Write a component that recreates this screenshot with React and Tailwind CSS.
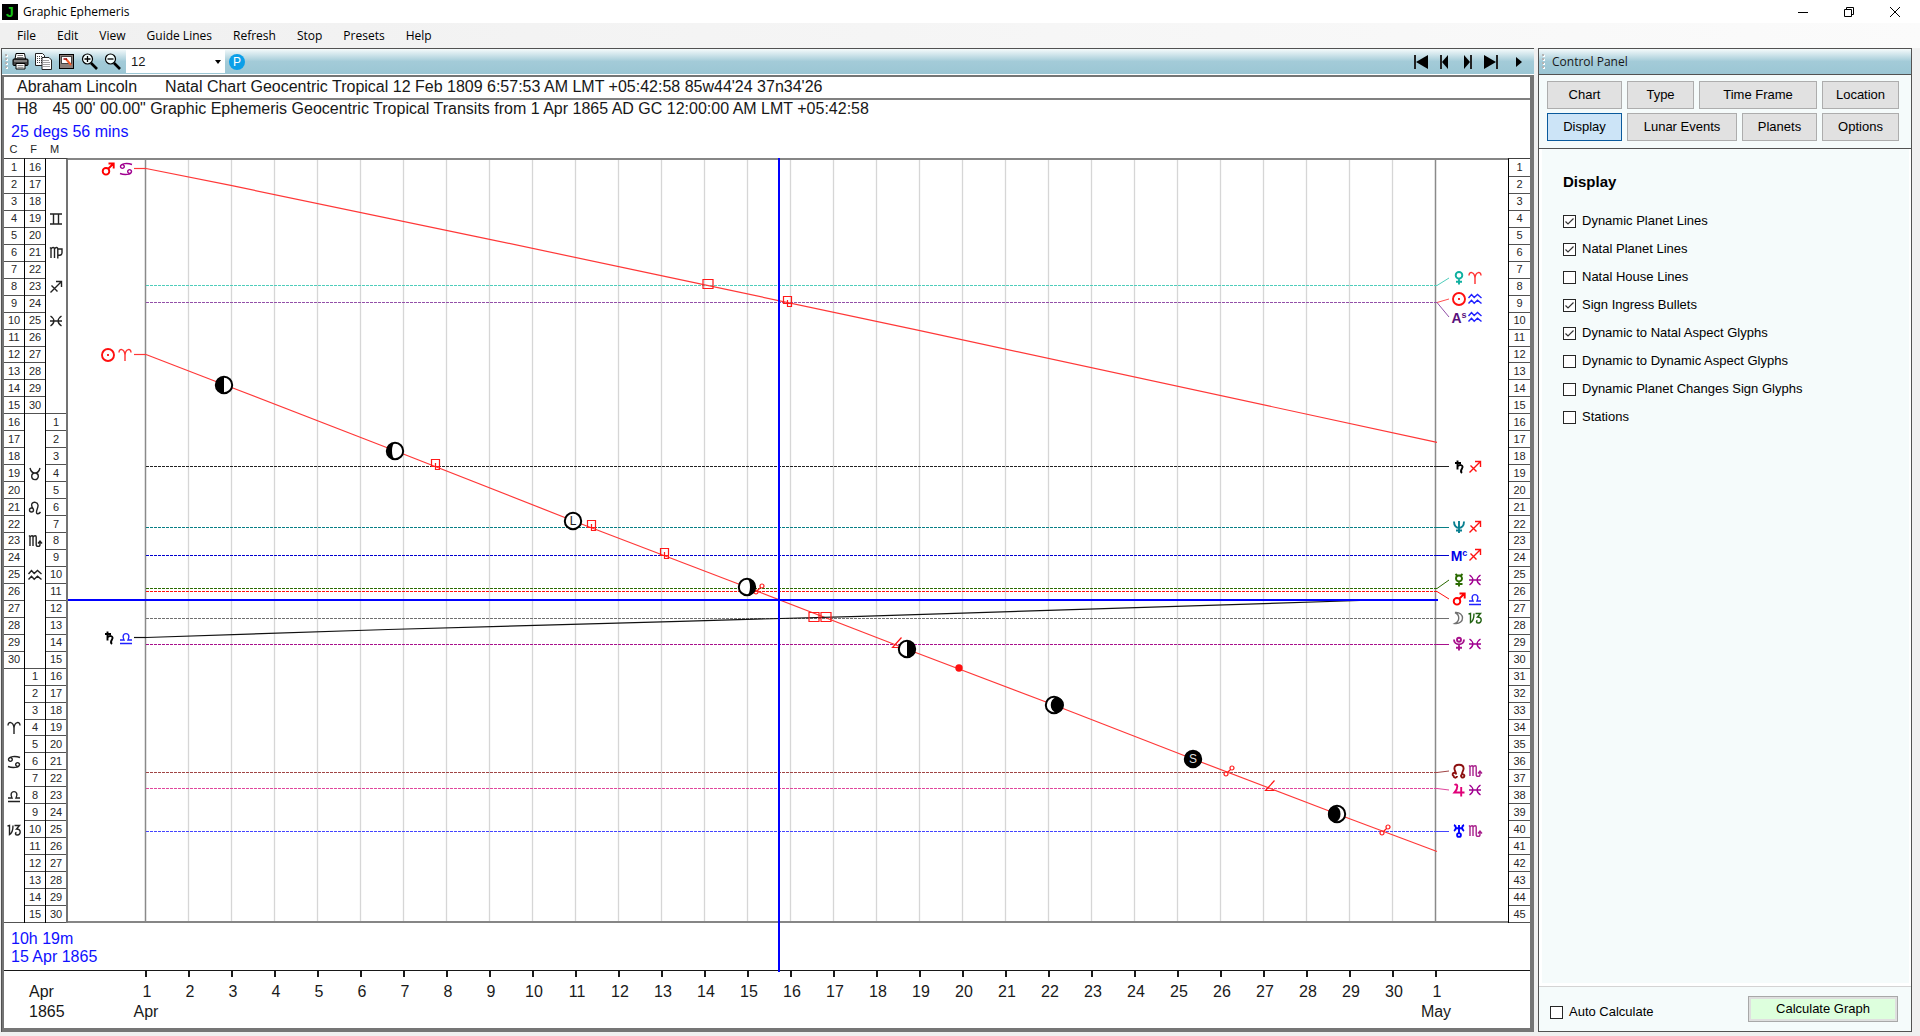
import React from "react";

const SIGNS = {
  aries: "M-6,-2.5C-6,-7 -0.5,-6.5 0,0V6M6,-2.5C6,-7 0.5,-6.5 0,0",
  taurus: "M-5,-6C-4,-2 -2,-1 0,-1S4,-2 5,-6M0,-1A3.3,3.3 0 1 1 0,5.6A3.3,3.3 0 1 1 0,-1",
  gemini: "M-6,-5H6M-6,5H6M-2.5,-5V5M2.5,-5V5",
  cancer:
    "M-5.5,-2.5A1.9,1.9 0 1 1 -1.7,-2.5A1.9,1.9 0 1 1 -5.5,-2.5C-5.5,-6 2,-6 6,-4.5M5.5,2.5A1.9,1.9 0 1 1 1.7,2.5A1.9,1.9 0 1 1 5.5,2.5C5.5,6 -2,6 -6,4.5",
  leo: "M-1.5,2A2,2 0 1 1 -5.5,2A2,2 0 1 1 -1.5,2C-1.5,0 -4.5,-1.5 -3,-4.5C-1.5,-6.5 2.5,-6 3,-3C3.5,0 0,4 2,5.5C3,6 4.5,5.5 5.5,4",
  virgo:
    "M-6,-5.5L-5,-4.5V5M-5,-4C-3.5,-6.5 -1.5,-5.5 -1.5,-4V5M-1.5,-4C0,-6.5 1.8,-5.5 1.8,-4V5.5M1.8,-4H6V0C6,2 4,2.5 1.8,2.5",
  libra: "M-6,5.5H6M-6,2H-2C-6.5,-6.5 6.5,-6.5 2,2H6",
  scorpio:
    "M-6,-5.5L-5,-4.5V5M-5,-4C-3.5,-6 -2,-5.5 -2,-4V5M-2,-4C-0.5,-6 1.2,-5.5 1.2,-4V3.5C1.2,6 5,6 5,3.5V0.5M3,2.5L5,0L7,2.5",
  sagittarius: "M-5.5,5.5L5.5,-5.5M0,-5.5H5.5V0M-4.5,-1.5L1.5,4.5",
  capricorn:
    "M-6.5,-4L-4.5,-4.5V4.5C-1.5,3 -1,0 -1,-4.5M0.5,-4.5H5.5L2.5,-1C7.5,-1 7,5 3.5,5C1.2,5 0.8,3 2.5,2.5",
  aquarius: "M-6.5,-1L-3.5,-4.5L-0.8,-1.5L2.5,-4.5L6.5,-1M-6.5,4.5L-3.5,1.2L-0.8,4.2L2.5,1.2L6.5,4.5",
  pisces: "M-5.5,-5C-1,-2 -1,2 -5.5,5M5.5,-5C1,-2 1,2 5.5,5M-6,0H6",
};

const PLANETS = {
  mars: "M1.3,2.3A3.3,3.3 0 1 1 -5.3,2.3A3.3,3.3 0 1 1 1.3,2.3M0.5,-0.5L5.5,-5.5M0.5,-5.5H5.7V-0.5",
  venus: "M3.3,-2.7A3.3,3.3 0 1 1 -3.3,-2.7A3.3,3.3 0 1 1 3.3,-2.7M0,0.8V6.5M-3,3.7H3",
  sun: "M6,0A6,6 0 1 1 -6,0A6,6 0 1 1 6,0M-0.9,0H0.9",
  saturn: "M-1.5,-6.5V2.5M-4,-4H2M-1.5,-0.5C1,-3.5 5,-1.5 3,1.5C2,3 1,4.5 3,6",
  neptune: "M-5,-5.5C-5,3 5,3 5,-5.5M0,-6V6M-3,3.5H3",
  mercury: "M-3.5,-6L-2,-4.5H2L3.5,-6M3,-1.5A3,3 0 1 1 -3,-1.5A3,3 0 1 1 3,-1.5M0,1.5V6.5M-3.5,4H3.5",
  moon: "M-4,-5.5C6,-6.5 6,6.5 -4,5.5C1,3 1,-3 -4,-5.5",
  pluto: "M2,-4.2A2,2 0 1 1 -2,-4.2A2,2 0 1 1 2,-4.2M-5,-4.5C-5,2 5,2 5,-4.5M0,0.5V6.5M-3,3.7H3",
  node: "M-2,5A1.7,1.7 0 1 1 -5.4,5A1.7,1.7 0 1 1 -3,3.3C-2.5,1.5 -4.6,0 -4.6,-2.5C-4.6,-7.5 4.6,-7.5 4.6,-2.5C4.6,0 2.5,1.5 3,3.3A1.7,1.7 0 1 1 2,5A1.7,1.7 0 1 1 5.4,5",
  jupiter: "M-4.5,-5C-1,-7 -0.5,-2 -4.5,2.5H5.5M2.2,-3V6.5",
  uranus: "M-5,-6C-2.5,-5 -2.5,-1.5 -5,0M5,-6C2.5,-5 2.5,-1.5 5,0M-4,-2.7H4M0,-6V2M1.9,4A1.9,1.9 0 1 1 -1.9,4A1.9,1.9 0 1 1 1.9,4",
};

const LEFT = 68;
const WIDTH = 1440;
const TOP = 158;
const HEIGHT = 765;
const px = (x) => `${((x - LEFT) / WIDTH) * 100}%`;
const py = (y) => `${((y - TOP) / HEIGHT) * 100}%`;
const dayX = (i) => 146 + 43 * i;
const DAYS = Array.from({ length: 31 }, (_, i) => i);

function At({ x, y, children }) {
  return (
    <svg x={px(x)} y={py(y)} width="1" height="1" className="overflow-visible">
      {children}
    </svg>
  );
}

function Seg({ a, b, color, width = 1, dash }) {
  return (
    <line x1={px(a[0])} y1={py(a[1])} x2={px(b[0])} y2={py(b[1])} stroke={color} strokeWidth={width} strokeDasharray={dash} />
  );
}

function Track({ points, color, width }) {
  return points.slice(1).map((p, i) => <Seg key={i} a={points[i]} b={p} color={color} width={width} />);
}

function Planet({ name, x, y, color }) {
  if (name === "As" || name === "Mc") {
    return (
      <At x={x} y={y}>
        <text textAnchor="middle" y="6" fill={color} className="text-[14px] font-bold">
          {name[0]}
          <tspan dy="-5" className="text-[9px]">
            {name[1]}
          </tspan>
        </text>
      </At>
    );
  }
  return (
    <At x={x} y={y}>
      <path d={PLANETS[name]} fill="none" stroke={color} strokeWidth={name === "moon" ? 1.4 : 1.9} />
    </At>
  );
}

function Sign({ name, x, y, color }) {
  return (
    <At x={x} y={y}>
      <path d={SIGNS[name]} fill="none" stroke={color} strokeWidth="1.4" />
    </At>
  );
}

const NATAL = [
  { p: "venus", s: "aries", y: 285.5, gy: 278, line: "#4fcdbb", pc: "#10b0a0", sc: "#ff3030" },
  { p: "sun", s: "aquarius", y: 302.5, gy: 299, line: "#ff5050", pc: "#ff1010", sc: "#2020ff", solo: true },
  { p: "As", s: "aquarius", y: 302.5, gy: 317, line: "#9350a8", pc: "#58107c", sc: "#2020ff" },
  { p: "saturn", s: "sagittarius", y: 466.5, gy: 467, line: "#222222", pc: "#000000", sc: "#ff1010" },
  { p: "neptune", s: "sagittarius", y: 527.5, gy: 527, line: "#087f86", pc: "#087f90", sc: "#ff1010" },
  { p: "Mc", s: "sagittarius", y: 555.5, gy: 555, line: "#0000cc", pc: "#0000e8", sc: "#ff1010" },
  { p: "mercury", s: "pisces", y: 588.5, gy: 580, line: "#2a6a00", pc: "#2a6a00", sc: "#a00090" },
  { p: "mars", s: "libra", y: 591.5, gy: 599, line: "#ff1010", pc: "#ff0000", sc: "#2020ff" },
  { p: "moon", s: "capricorn", y: 618.5, gy: 618, line: "#707070", pc: "#707070", sc: "#206010" },
  { p: "pluto", s: "pisces", y: 644.5, gy: 644, line: "#a8108c", pc: "#a8108c", sc: "#a00090" },
  { p: "node", s: "scorpio", y: 772.5, gy: 771, line: "#a04545", pc: "#8c1010", sc: "#a8208c" },
  { p: "jupiter", s: "pisces", y: 788.5, gy: 790, line: "#e0459c", pc: "#e00078", sc: "#a00090" },
  { p: "uranus", s: "scorpio", y: 831.5, gy: 831, line: "#4545ff", pc: "#0000ff", sc: "#a8208c" },
];

const MARS = [[134, 168.5], [146, 168.5], [232, 185.7], [480, 237.3], [660, 275.3], [920, 330.7], [1437, 442.3]];
const SUN = [[134, 354.5], [146, 354.5], [225, 385], [395, 450.7], [573, 520.7], [747, 587.3], [907, 649.3], [1054, 705], [1193, 759], [1337, 814], [1437, 851.5]];
const SATURN = [[134, 637.5], [146, 637.5], [388, 629.5], [680, 621.3], [860, 616.3], [1360, 600.5], [1437, 599.5]];

const PHASES = [
  { x: 224, y: 385, d: "M0,-8A8,8 0 0 0 0,8Z" },
  { x: 395, y: 451, d: "M0,-8A8,8 0 0 0 0,8A3,8 0 0 1 0,-8Z" },
  { x: 573, y: 521, letter: "L" },
  { x: 747, y: 587, d: "M0,-8A8,8 0 0 1 0,8A3,8 0 0 0 0,-8Z" },
  { x: 907, y: 649, d: "M0,-8A8,8 0 0 1 0,8Z" },
  { x: 1054, y: 705, d: "M2,-8A8,8 0 0 1 2,8C-5,5 -5,-5 2,-8Z" },
  { x: 1193, y: 759, letter: "S", dark: true },
  { x: 1337, y: 814, d: "M-1,-8A8,8 0 0 0 -1,8C5,5 5,-5 -1,-8Z" },
];

const ASPECT = {
  square: "M-5,-4.5H5V4.5H-5Z",
  sesqui: "M-4.5,-4.5H3.5V2.5H-4.5ZM-0.5,-1V5.5H3.5V2.5",
  semi: "M4.5,-5.5L-4.5,4.5H4.5",
  opposition: "M5,-3A2,2 0 1 1 1,-3A2,2 0 1 1 5,-3M-1,3A2,2 0 1 1 -5,3A2,2 0 1 1 -1,3M-2,2L2,-2",
};
const ASPECTS = [
  ["square", 708, 284], ["sesqui", 788, 301], ["sesqui", 436, 464], ["sesqui", 592, 525],
  ["sesqui", 665, 553], ["opposition", 759, 589], ["square", 814, 617], ["square", 826, 617],
  ["semi", 897, 643], ["opposition", 1229, 771], ["semi", 1270, 786], ["opposition", 1385, 830],
];

function Plot() {
  return (
    <svg className="block size-full overflow-visible" role="img" aria-label="Graphic ephemeris plot">
      {DAYS.map((i) => (
        <Seg key={i} a={[dayX(i) - 0.5, 159]} b={[dayX(i) - 0.5, 923]} color={i % 30 === 0 ? "#8a8a8a" : "#d6d6d6"} width={i % 30 === 0 ? 1.5 : 1.3} />
      ))}
      <Seg a={[68, 159]} b={[1508, 159]} color="#868686" width={2} />
      <Seg a={[68, 922]} b={[1508, 922]} color="#868686" width={2} />
      {NATAL.map((n) => (
        <g key={n.p}>
          {!n.solo && <Seg a={[146, n.y]} b={[1437, n.y]} color={n.line} dash="3 1" />}
          <Seg a={[1437, n.y]} b={[1449, Math.abs(n.gy - n.y) < 1 ? n.y : n.gy]} color={n.line} />
          <Planet name={n.p} x={1459} y={n.gy} color={n.pc} />
          <Sign name={n.s} x={1475} y={n.gy} color={n.sc} />
        </g>
      ))}
      <Track points={MARS} color="#ff3838" width={1.2} />
      <Track points={SUN} color="#ff3838" width={1.2} />
      <Track points={SATURN} color="#111111" width={1.2} />
      <Planet name="mars" x={108} y={169} color="#ff0000" />
      <Sign name="cancer" x={126} y={169} color="#a00090" />
      <Planet name="sun" x={108} y={355} color="#ff1010" />
      <Sign name="aries" x={125} y={355} color="#ff3030" />
      <Planet name="saturn" x={109} y={638} color="#000000" />
      <Sign name="libra" x={126} y={638} color="#2020ff" />
      {ASPECTS.map(([kind, x, y]) => (
        <At key={`${x}`} x={x} y={y}>
          <path d={ASPECT[kind]} fill="none" stroke="#ff1a1a" strokeWidth="1.2" />
        </At>
      ))}
      <At x={959} y={668}>
        <circle r="3.7" fill="#ff1010" />
      </At>
      {PHASES.map((m) => (
        <At key={m.x} x={m.x} y={m.y}>
          <circle r="8.2" fill={m.dark ? "#000" : "#fff"} stroke="#000" strokeWidth="2" />
          {m.d && <path d={m.d} />}
          {m.letter && (
            <text textAnchor="middle" y="4" fill={m.dark ? "#ddd" : "#222"} className="text-[12px]">
              {m.letter}
            </text>
          )}
        </At>
      ))}
      <Seg a={[68, 600]} b={[1438, 600]} color="#0000ff" width={2} />
      <rect x={px(778)} y="0" width="2" fill="#0000ff" className="h-[calc(100%+49px)]" />
    </svg>
  );
}

function Column({ cells, glyphs = {}, className }) {
  return (
    <div className={`grid grid-rows-[repeat(45,minmax(0,1fr))] border-t border-neutral-700 bg-white pt-px text-[11px] leading-none text-neutral-800 ${className}`}>
      {cells.map((v, i) => {
        const line = v !== null || (i < 44 && cells[i + 1] !== null) || i === 44;
        const g = glyphs[i + 1];
        return (
          <div key={i} className={`flex min-h-0 items-center justify-center ${line ? "border-b border-neutral-600" : ""}`}>
            {v}
            {g && (
              <svg width="16" height="14" viewBox="-8 -7 16 14" className="shrink-0 overflow-visible">
                <path d={SIGNS[g]} fill="none" stroke="#222" strokeWidth="1.4" />
              </svg>
            )}
          </div>
        );
      })}
    </div>
  );
}

const range = (a, b) => Array.from({ length: b - a + 1 }, (_, i) => a + i);
const blank = Array(15).fill(null);

function Grip() {
  return (
    <svg width="4" height="16" className="shrink-0" aria-hidden="true">
      {[0, 4, 8, 12].map((y) => (
        <g key={y}>
          <rect x="1" y={y + 1} width="2" height="2" fill="#fff" />
          <rect x="0" y={y} width="2" height="2" fill="#b4b4b4" />
        </g>
      ))}
    </svg>
  );
}

function ToolButton({ label, children }) {
  return (
    <button type="button" aria-label={label} className="flex h-6 w-[23px] shrink-0 items-center justify-center">
      <svg width="17" height="17" viewBox="0 0 17 17" aria-hidden="true">
        {children}
      </svg>
    </button>
  );
}

function Magnifier({ plus }) {
  return (
    <>
      <path d="M10,10L16,16" stroke="#000" strokeWidth="2.6" />
      <circle cx="6.5" cy="6" r="5" fill="#f4ffff" stroke="#000" strokeWidth="1.2" />
      <path d={plus ? "M3.5,6H9.5M6.5,3V9" : "M3.5,6H9.5"} stroke="#000" strokeWidth="1.3" />
    </>
  );
}

function NavButton({ label, d, bar, className }) {
  return (
    <button type="button" aria-label={label} className={`flex h-6 items-center justify-center ${className}`}>
      <svg width="15" height="14" viewBox="0 0 15 14" aria-hidden="true">
        <path d={d} />
        {bar && <path d={bar} fill="#222" />}
      </svg>
    </button>
  );
}

function Toolbar() {
  return (
    <div className="flex h-[26px] shrink-0 items-center border-b border-white bg-gradient-to-b from-[#f4fafb] via-[#a3cbd8] via-50% to-[#9bc6d4] pl-[3px]">
      <Grip />
      <div className="flex">
        <ToolButton label="Print">
          <path d="M4,0.5H12.5L13.5,6H3Z" fill="#fff" stroke="#000" />
          <path d="M5.5,2.5H11M5,4.5H11.5" stroke="#777" />
          <rect x="1" y="6" width="15" height="6.5" rx="1" fill="#444" stroke="#000" />
          <path d="M2,8H15" stroke="#bbb" />
          <path d="M4,10.5H13V16H4Z" fill="#fff" stroke="#000" />
          <path d="M5.5,12.5H11.5M5.5,14.3H11.5" stroke="#888" />
        </ToolButton>
        <ToolButton label="Copy">
          <path d="M0.5,0.5H7.5L9.5,2.5V12.5H0.5Z" fill="#fff" stroke="#222" />
          <path d="M2,3.5H8M2,5.5H8M2,7.5H8M2,9.5H8" stroke="#444" strokeDasharray="1 1" />
          <path d="M7,4.5H14L16.5,7V16.5H7Z" fill="#fff" stroke="#222" />
          <path d="M8.5,7.5H14M8.5,9.5H15M8.5,11.5H15M8.5,13.5H15" stroke="#444" strokeDasharray="1 1" />
        </ToolButton>
        <ToolButton label="Image">
          <rect x="1.5" y="1.5" width="14" height="14" fill="#8a7f7a" stroke="#000" />
          <rect x="3.5" y="3.5" width="10" height="7" fill="#fff" stroke="#444" />
          <path d="M8,6L13,12" stroke="#f05a28" strokeWidth="2" />
          <path d="M5.5,6H9" stroke="#900" strokeWidth="1.5" />
        </ToolButton>
        <ToolButton label="Zoom in">
          <Magnifier plus />
        </ToolButton>
        <ToolButton label="Zoom out">
          <Magnifier />
        </ToolButton>
      </div>
      <div className="ml-[2px] grid h-[23px] w-[99px] items-center bg-white">
        <select aria-label="Font size" defaultValue="12" className="col-start-1 row-start-1 h-full w-full appearance-none bg-transparent pl-[5px] text-[13px] text-neutral-900">
          <option>12</option>
        </select>
        <svg width="7" height="4" className="pointer-events-none col-start-1 row-start-1 mr-[3px] justify-self-end" aria-hidden="true">
          <path d="M0,0H6L3,4Z" />
        </svg>
      </div>
      <button type="button" className="ml-1 flex size-4 items-center justify-center rounded-full bg-[#0b9fe8] text-[12px] leading-none text-white">
        P
      </button>
      <div className="ml-auto flex items-center">
        <NavButton label="First" className="w-[28px]" d="M14,0V14L2,7Z" bar="M0,0H2V14H0Z" />
        <NavButton label="Previous" className="w-[19px]" d="M11,0V14L5,7Z" bar="M3,0H5V14H3Z" />
        <NavButton label="Next" className="w-[26px]" d="M4,0V14L10,7Z" bar="M10,0H12V14H10Z" />
        <NavButton label="Last" className="w-[22px]" d="M0,0V14L12,7Z" bar="M12,0H14V14H12Z" />
        <NavButton label="Play" className="w-[32px]" d="M5,2V12L11,7Z" />
      </div>
    </div>
  );
}

function Axis() {
  return (
    <svg className="block size-full overflow-visible text-[16px]" fill="#1a1a1a">
      {DAYS.map((i) => (
        <g key={i}>
          <rect x={px(dayX(i) - 1)} y="0" width="2" height="6" />
          <text x={px(dayX(i) + 1)} y="26" textAnchor="middle">
            {i === 30 ? 1 : i + 1}
          </text>
        </g>
      ))}
      <text x={px(146)} y="46" textAnchor="middle">Apr</text>
      <text x={px(1436)} y="46" textAnchor="middle">May</text>
    </svg>
  );
}

function ChartWindow() {
  return (
    <section className="flex min-w-0 flex-1 flex-col border-l border-t border-neutral-600">
      <Toolbar />
      <div className="flex min-h-0 flex-1 flex-col border-b-4 border-l-2 border-r-4 border-t-2 border-[#757575] bg-white">
        <div className="flex h-[23px] shrink-0 items-center gap-[28px] border-b-2 border-[#808080] pb-[2px] pl-[13px] text-[16px] leading-5 text-neutral-900">
          <span>Abraham Lincoln</span>
          <span>Natal Chart Geocentric Tropical 12 Feb 1809 6:57:53 AM LMT +05:42:58 85w44'24 37n34'26</span>
        </div>
        <div className="flex h-[18px] shrink-0 items-center gap-[15px] pl-[13px] text-[16px] text-neutral-900">
          <span>H8</span>
          <span>45 00' 00.00" Graphic Ephemeris Geocentric Tropical Transits from 1 Apr 1865 AD GC 12:00:00 AM LMT +05:42:58</span>
        </div>
        <div className="flex h-[25px] shrink-0 items-end pl-[7px] text-[16px] leading-[22px] text-[#1010ff]">25 degs 56 mins</div>
        <div className="flex h-[15px] shrink-0 items-start text-[11px] leading-3 text-neutral-800">
          <span className="w-[19px] text-center">C</span>
          <span className="w-[21px] text-center">F</span>
          <span className="w-[21px] text-center">M</span>
        </div>
        <div className="flex min-h-[675px] flex-1">
          <div className="flex w-[64px] shrink-0">
            <Column className="w-[21px] border-r border-r-black" cells={[...range(1, 30), ...blank]} glyphs={{ 34: "aries", 36: "cancer", 38: "libra", 40: "capricorn" }} />
            <Column className="w-[21px] border-r border-r-black" cells={[...range(16, 30), ...blank, ...range(1, 15)]} glyphs={{ 19: "taurus", 21: "leo", 23: "scorpio", 25: "aquarius" }} />
            <Column className="w-[22px] border-r-2 border-r-neutral-500" cells={[...blank, ...range(1, 30)]} glyphs={{ 4: "gemini", 6: "virgo", 8: "sagittarius", 10: "pisces" }} />
          </div>
          <div className="relative min-w-0 flex-1">
            <div className="absolute inset-0">
              <Plot />
            </div>
          </div>
          <Column className="w-[22px] shrink-0 border-l border-l-black" cells={range(1, 45)} />
        </div>
        <div className="flex h-[48px] shrink-0 flex-col justify-end border-b border-neutral-900 pb-1 pl-[7px] text-[16px] leading-[18px] text-[#1010ff]">
          <span>10h 19m</span>
          <span>15 Apr 1865</span>
        </div>
        <div className="flex h-[57px] shrink-0">
          <div className="flex w-[64px] shrink-0 flex-col pl-[25px] pt-[11px] text-[16px] leading-5 text-neutral-900">
            <span>Apr</span>
            <span>1865</span>
          </div>
          <div className="min-w-0 flex-1">
            <Axis />
          </div>
          <div className="w-[22px] shrink-0" />
        </div>
      </div>
    </section>
  );
}

function Check({ children, checked }) {
  return (
    <label className="flex h-7 items-center gap-[6px] text-[13px] text-black">
      <span className="grid size-[13px] place-items-center">
        <input type="checkbox" defaultChecked={checked} className="peer col-start-1 row-start-1 size-[13px] appearance-none border border-neutral-800 bg-white" />
        <svg width="11" height="9" viewBox="0 0 11 9" className="pointer-events-none col-start-1 row-start-1 hidden peer-checked:block" aria-hidden="true">
          <path d="M1.5,4.5L4,7L9.5,1.5" fill="none" stroke="#333" strokeWidth="1.2" />
        </svg>
      </span>
      {children}
    </label>
  );
}

function TabButton({ children, className, active }) {
  return (
    <button
      type="button"
      aria-pressed={!!active}
      className={`h-[28px] grow border text-[13px] text-black ${active ? "border-[#0a5a9c] bg-[#cce4f7]" : "border-[#adadad] bg-[#e1e1e1]"} ${className}`}
    >
      {children}
    </button>
  );
}

function ControlPanel() {
  return (
    <aside className="mr-2 flex w-[374px] shrink-0 flex-col border border-neutral-600 bg-[#f5fbfb]">
      <header className="flex h-[26px] shrink-0 items-center gap-[6px] border-b border-neutral-600 bg-gradient-to-b from-[#f4fafb] via-[#a3cbd8] via-50% to-[#9bc6d4] pl-[3px] font-['Open_Sans',sans-serif] text-[12px] text-neutral-900">
        <Grip />
        <h1>Control Panel</h1>
      </header>
      <div className="flex shrink-0 flex-col gap-1 border-b border-neutral-600 pb-[7px] pl-[8px] pr-[12px] pt-[6px]">
        <div className="flex gap-[5px]">
          <TabButton className="basis-[75px]">Chart</TabButton>
          <TabButton className="basis-[67px]">Type</TabButton>
          <TabButton className="basis-[118px]">Time Frame</TabButton>
          <TabButton className="basis-[77px]">Location</TabButton>
        </div>
        <div className="flex gap-[5px]">
          <TabButton className="basis-[75px]" active>Display</TabButton>
          <TabButton className="basis-[110px]">Lunar Events</TabButton>
          <TabButton className="basis-[75px]">Planets</TabButton>
          <TabButton className="basis-[77px]">Options</TabButton>
        </div>
      </div>
      <div className="flex min-h-0 flex-1 flex-col border-b-[3px] border-l-[3px] border-r-2 border-white pl-[21px] pt-[22px]">
        <h2 className="h-[36px] text-[15px] font-bold leading-[21px] text-black">Display</h2>
        <Check checked>Dynamic Planet Lines</Check>
        <Check checked>Natal Planet Lines</Check>
        <Check>Natal House Lines</Check>
        <Check checked>Sign Ingress Bullets</Check>
        <Check checked>Dynamic to Natal Aspect Glyphs</Check>
        <Check>Dynamic to Dynamic Aspect Glyphs</Check>
        <Check>Dynamic Planet Changes Sign Glyphs</Check>
        <Check>Stations</Check>
      </div>
      <footer className="flex h-[45px] shrink-0 items-start justify-between border-t border-neutral-300 pl-[11px] pr-[13px] pt-[9px]">
        <div className="pt-[2px]">
          <Check>Auto Calculate</Check>
        </div>
        <button type="button" className="h-[26px] w-[150px] border border-[#a8a8a8] bg-[#ddffdd] text-[13px] text-black ring-2 ring-inset ring-[#dfdfdf]">
          Calculate Graph
        </button>
      </footer>
    </aside>
  );
}

export default function App() {
  return (
    <div className="flex h-screen min-h-[940px] flex-col bg-[#f0f0f0] pb-1 font-['Liberation_Sans',Arial,sans-serif]">
      <div className="flex h-[23px] shrink-0 items-center bg-white pl-[2px] pr-[2px] font-['Open_Sans',sans-serif] text-[12px] text-black">
        <span className="flex size-4 items-center justify-center bg-black font-['Liberation_Sans',sans-serif] text-[14px] font-bold leading-4 text-[#18c018]" aria-hidden="true">
          J
        </span>
        <span className="pl-[5px]">Graphic Ephemeris</span>
        <div className="ml-auto flex">
          <button type="button" aria-label="Minimize" className="flex w-[46px] justify-center">
            <svg width="10" height="10" stroke="#000"><path d="M0,5.5H10" /></svg>
          </button>
          <button type="button" aria-label="Restore" className="flex w-[46px] justify-center">
            <svg width="10" height="10" fill="none" stroke="#000"><path d="M0.5,2.5H7.5V9.5H0.5ZM2.5,2.5V0.5H9.5V7.5H7.5" /></svg>
          </button>
          <button type="button" aria-label="Close" className="flex w-[46px] justify-center">
            <svg width="10" height="10" stroke="#000"><path d="M0,0L10,10M10,0L0,10" /></svg>
          </button>
        </div>
      </div>
      <nav className="flex h-[25px] shrink-0 items-center gap-[21px] bg-gradient-to-r from-[#f0f0f0] to-[#fbfbfb] pl-[17px] pt-px font-['Open_Sans',sans-serif] text-[12px] text-black">
        {["File", "Edit", "View", "Guide Lines", "Refresh", "Stop", "Presets", "Help"].map((m) => (
          <button key={m} type="button">{m}</button>
        ))}
      </nav>
      <main className="flex min-h-0 flex-1 gap-1 pl-[1px]">
        <ChartWindow />
        <ControlPanel />
      </main>
    </div>
  );
}
